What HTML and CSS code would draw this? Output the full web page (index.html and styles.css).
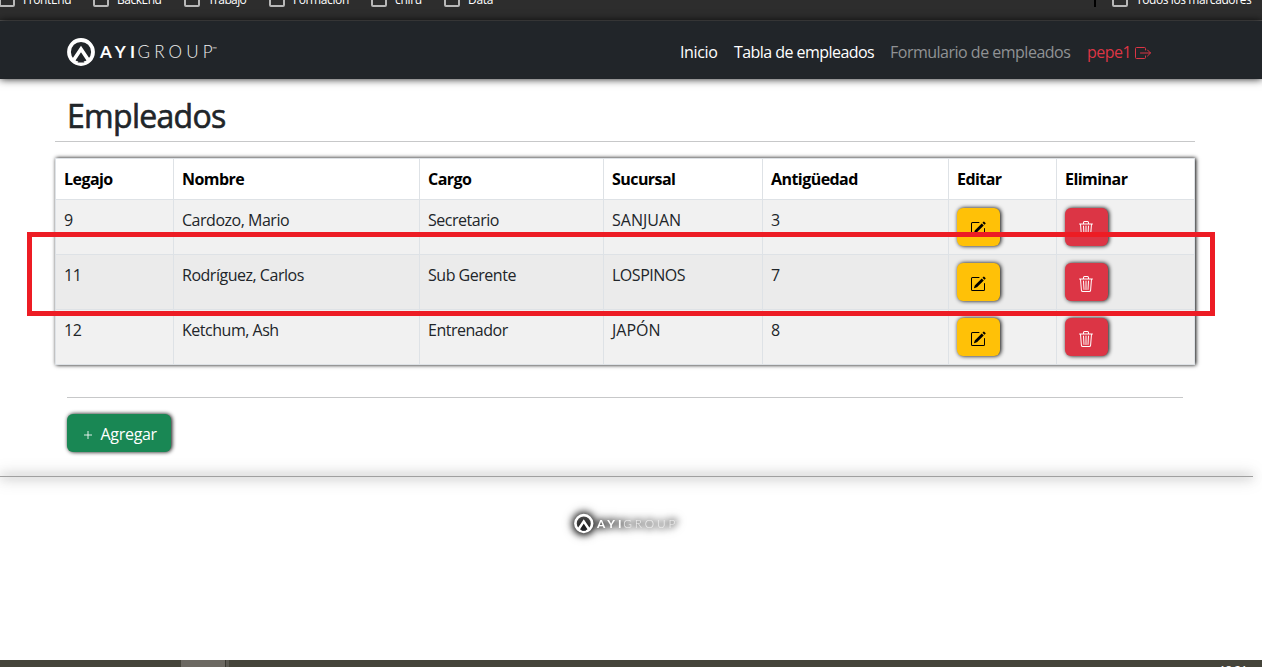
FILE: index.html
```html
<!DOCTYPE html>
<html lang="es">
<head>
<meta charset="utf-8">
<title>Empleados</title>
<link rel="stylesheet" href="styles.css">
</head>
<body>
<svg class="defs" width="0" height="0">
  <symbol id="logo" viewBox="0 0 152 30">
    <circle cx="14" cy="15" r="12" fill="none" stroke="#fff" stroke-width="3.8"/>
    <path d="M6 24 14 12 22 24" fill="none" stroke="#fff" stroke-width="3.600"/>
    <path d="M10.600 25.500 14 20l3.400 5.500z" fill="#22252a"/>
    <text class="logo-bold" x="33" y="21" textLength="35">AYI</text>
    <text class="logo-light" x="70.500" y="21" textLength="75">GROUP</text>
    <text class="logo-tm" x="145" y="14" textLength="5">™</text>
  </symbol>
  <symbol id="edit" viewBox="0 0 16 16">
    <path d="M15.502 1.940a.5.5 0 0 1 0 .706L14.459 3.690l-2-2L13.502.646a.5.5 0 0 1 .707 0l1.293 1.293zm-1.750 2.456-2-2L4.939 9.210a.5.5 0 0 0-.121.196l-.805 2.414a.25.25 0 0 0 .316.316l2.414-.805a.5.5 0 0 0 .196-.12l6.813-6.814z"/>
    <path fill-rule="evenodd" d="M1 13.500A1.500 1.500 0 0 0 2.500 15h11a1.500 1.500 0 0 0 1.500-1.500v-6a.5.5 0 0 0-1 0v6a.5.5 0 0 1-.5.5h-11a.5.5 0 0 1-.5-.5v-11a.5.5 0 0 1 .5-.5H9a.5.5 0 0 0 0-1H2.500A1.500 1.500 0 0 0 1 2.500v11z"/>
  </symbol>
  <symbol id="trash" viewBox="0 0 16 16">
    <path d="M6.500 1h3a.5.5 0 0 1 .5.5v1H6v-1a.5.5 0 0 1 .5-.5ZM11 2.500v-1A1.500 1.500 0 0 0 9.500 0h-3A1.500 1.500 0 0 0 5 1.500v1H2.506a.58.58 0 0 0-.01 0H1.500a.5.5 0 0 0 0 1h.538l.853 10.660A2 2 0 0 0 4.885 16h6.230a2 2 0 0 0 1.994-1.840l.853-10.660h.538a.5.5 0 0 0 0-1h-.995a.59.59 0 0 0-.01 0H11Zm1.958 1-.846 10.580a1 1 0 0 1-.997.920h-6.230a1 1 0 0 1-.997-.920L3.042 3.500h9.916Zm-7.487 1a.5.5 0 0 1 .528.470l.5 8.500a.5.5 0 0 1-.998.060L5 5.030a.5.5 0 0 1 .470-.530Zm5.058 0a.5.5 0 0 1 .470.530l-.5 8.500a.5.5 0 1 1-.998-.060l.5-8.500a.5.5 0 0 1 .528-.470ZM8 4.500a.5.5 0 0 1 .5.5v8.500a.5.5 0 0 1-1 0V5a.5.5 0 0 1 .5-.5Z"/>
  </symbol>
</svg>

<div class="bookmarks">
  <span class="bm bm-front"><i class="folder"></i>FrontEnd</span>
  <span class="bm bm-back"><i class="folder"></i>BackEnd</span>
  <span class="bm bm-work"><i class="folder"></i>Trabajo</span>
  <span class="bm bm-form"><i class="folder"></i>Formacion</span>
  <span class="bm bm-chiru"><i class="folder"></i>chiru</span>
  <span class="bm bm-data"><i class="folder"></i>Data</span>
  <span class="bm bm-all"><i class="folder"></i>Todos los marcadores</span>
</div>

<nav class="navbar">
  <svg class="brand" width="152" height="30"><use href="#logo"/></svg>
  <div class="links">
    <a class="l-home">Inicio</a>
    <a class="l-table">Tabla de empleados</a>
    <a class="l-form">Formulario de empleados</a>
    <a class="l-user">pepe1<svg width="16" height="16" viewBox="0 0 16 16" fill="none" stroke="currentColor"><path d="M10.500 5V3.500a1 1 0 0 0-1-1h-8a1 1 0 0 0-1 1v9a1 1 0 0 0 1 1h8a1 1 0 0 0 1-1V11M5.500 8h10M12.500 5l3 3-3 3" stroke-linecap="round" stroke-linejoin="round"/></svg></a>
  </div>
</nav>

<main class="page">
  <h1><span>Empleados</span></h1>
  <table>
    <colgroup><col class="c1"><col class="c2"><col class="c3"><col class="c4"><col class="c5"><col class="c6"><col class="c7"></colgroup>
    <thead>
      <tr><th>Legajo</th><th>Nombre</th><th>Cargo</th><th>Sucursal</th><th>Antigüedad</th><th>Editar</th><th>Eliminar</th></tr>
    </thead>
    <tbody>
      <tr><td>9</td><td>Cardozo, Mario</td><td>Secretario</td><td class="caps">SANJUAN</td><td>3</td><td><button class="btn edit"><svg width="16" height="16"><use href="#edit"/></svg></button></td><td><button class="btn del"><svg width="16" height="16"><use href="#trash"/></svg></button></td></tr>
      <tr class="hover"><td>11</td><td>Rodríguez, Carlos</td><td>Sub Gerente</td><td>LOSPINOS</td><td>7</td><td><button class="btn edit"><svg width="16" height="16"><use href="#edit"/></svg></button></td><td><button class="btn del"><svg width="16" height="16"><use href="#trash"/></svg></button></td></tr>
      <tr><td>12</td><td>Ketchum, Ash</td><td>Entrenador</td><td class="caps">JAPÓN</td><td>8</td><td><button class="btn edit"><svg width="16" height="16"><use href="#edit"/></svg></button></td><td><button class="btn del"><svg width="16" height="16"><use href="#trash"/></svg></button></td></tr>
    </tbody>
  </table>
  <div class="actions">
    <button class="add"><svg width="10" height="10" viewBox="0 0 10 10"><path d="M5 1v8M1 5h8" stroke="#fff" stroke-opacity=".85"/></svg><span>Agregar</span></button>
  </div>
</main>

<footer><svg class="foot-logo" width="106" height="21"><use href="#logo"/></svg></footer>
<div class="taskbar"><span class="task"></span><span class="task-edge"></span><span class="clock">18:21</span></div>
<div class="highlight"></div>
</body>
</html>
```
FILE: styles.css
```css
* { box-sizing: border-box; }
body {
  margin: 0;
  height: 667px;
  overflow: hidden;
  display: flex;
  flex-direction: column;
  position: relative;
  background: #fff;
  color: #212529;
  font: 16px/24px "Open Sans", "Noto Sans", sans-serif;
}
.defs { display: none; }

.bookmarks {
  height: 21px;
  flex: none;
  display: flex;
  overflow: hidden;
  background: #2d2d2d;
  border-bottom: 1px solid #5a5a5a;
  color: #fff;
  font: 12px/16px "Open Sans", "Noto Sans", sans-serif;
}
.bm { display: flex; flex: none; margin-top: -8px; height: 16px; white-space: nowrap; letter-spacing: -.4px; }
.folder {
  flex: none;
  width: 16px;
  height: 15px;
  margin-right: 8px;
  border: 2px solid #b8b8b8;
  border-radius: 2px;
}
.bm-front { width: 94px; margin-left: -1px; }
.bm-back { width: 91px; letter-spacing: -.5px; }
.bm-work { width: 85px; letter-spacing: -.6px; }
.bm-form { width: 102px; }
.bm-chiru { width: 73px; letter-spacing: -.3px; }
.bm-data { width: 80px; letter-spacing: -.3px; }
.bm-all { margin-left: auto; width: 168px; padding-left: 16px; height: 15px; border-left: 2px solid #000; }

.navbar {
  flex: none;
  height: 58px;
  padding: 0 111px 0 67px;
  display: flex;
  justify-content: space-between;
  align-items: center;
  background: #212529;
  box-shadow: 0 0 8px rgba(0, 0, 0, .9);
}
.brand { margin-top: 3px; }
.logo-bold { font: 700 17px Lato, sans-serif; fill: #fff; }
.logo-light { font: 300 17px Lato, sans-serif; fill: #f0f0f0; }
.logo-tm { font: 6px Lato, sans-serif; fill: #ddd; }
.links { display: flex; gap: 16px; color: #fff; white-space: nowrap; padding-top: 3px; letter-spacing: -.5px; }
.links a { display: block; }
.links .l-home { width: 38px; letter-spacing: -.35px; }
.l-table { width: 140px; letter-spacing: -.55px; }
.l-form { width: 181px; color: #909294; }
.links .l-user { display: flex; align-items: center; justify-content: space-between; width: 64px; color: #dc3545; }
.l-user svg { flex: none; margin-top: 2px; }

.page { flex: none; width: 1140px; margin-left: 55px; height: 397px; }
h1 {
  margin: 0 0 16px;
  padding: 16px 12px 0;
  height: 63px;
  border-bottom: 1px solid #c7c8c9;
  font-size: 32px;
  line-height: 42px;
  font-weight: 500;
  letter-spacing: -.7px;
  -webkit-text-stroke: .6px #212529;
}
table {
  width: 1139px;
  table-layout: fixed;
  border-collapse: collapse;
  box-shadow: 1px 0 4px #000;
  letter-spacing: -.48px;
}
.c1 { width: 118px; }
.c2 { width: 246px; }
.c3 { width: 184px; }
.c4 { width: 159px; }
.c5 { width: 186px; }
.c6 { width: 108px; }
.c7 { width: 138px; }
th, td { padding: 0 8px; border: 1px solid #dee2e6; text-align: left; vertical-align: top; white-space: nowrap; }
th { height: 41px; padding-top: 8px; color: #000; font-weight: 700; line-height: 24px; letter-spacing: -.55px; }
td { height: 55px; padding-top: 8px; background: #f1f1f1; color: #212529; }
.caps { letter-spacing: 0; }
.hover td { background: #ebebeb; }
.btn {
  display: flex;
  align-items: center;
  justify-content: center;
  width: 43px;
  height: 38px;
  margin: 0 0 0 -.5px;
  padding: 3px 0 0;
  border: 0;
  border-radius: 6px;
  box-shadow: 1px 0 4px #000;
}
.btn svg { fill: currentColor; }
.edit { background: #ffc107; color: #000; }
.del { background: #dc3545; color: #fff; }

.actions { margin: 32px 12px 0; padding-top: 16px; border-top: 1px solid #c7c8c9; }
.add {
  display: flex;
  align-items: center;
  width: 103.5px;
  height: 38px;
  padding: 1px 0 0 16px;
  gap: 7.5px;
  border: 0;
  border-radius: 6px;
  background: #198754;
  box-shadow: 1px 0 4px #000;
  color: #fff;
  font: 16px/24px "Open Sans", "Noto Sans", sans-serif;
  letter-spacing: -.3px;
}
.add svg { margin-top: 3px; }

footer {
  flex: none;
  width: 1253px;
  height: 184px;
  padding: 36px 0 0 574px;
}
footer::before {
  content: "";
  display: block;
  height: 1px;
  margin-left: -574px;
  transform: translateY(-36px);
  background: #a0a0a0;
  box-shadow: 0 0 16px #000, 0 0 10px rgba(0, 0, 0, .6);
}
.foot-logo { display: block; overflow: visible; filter: drop-shadow(0 0 4px #000) drop-shadow(0 0 3px #000); }

.taskbar { flex: none; height: 7px; display: flex; overflow: hidden; background: #45443a; padding-left: 181px; }
.task { width: 44px; background: #6c6962; }
.task-edge { width: 4px; background: #5b5952; border-left: 1px solid #3a3932; }
.clock { margin: 4px 15px 0 auto; color: #fff; font: 12px/14px "Open Sans", "Noto Sans", sans-serif; letter-spacing: -.5px; }

.highlight {
  position: absolute;
  left: 27px;
  top: 232px;
  width: 1188px;
  height: 84px;
  border: 5px solid #ed1c24;
}
```
